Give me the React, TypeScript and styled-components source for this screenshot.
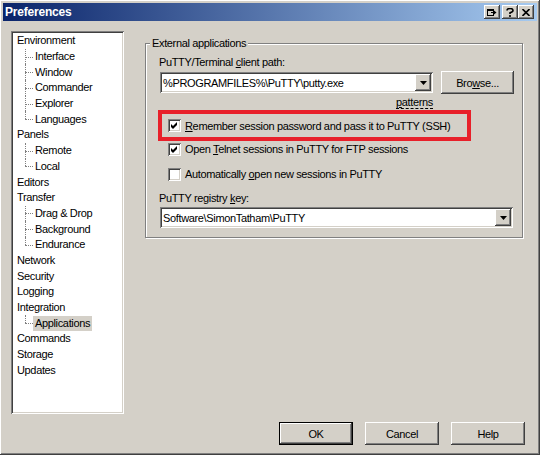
import React from "react";
import styled, { createGlobalStyle } from "styled-components";

const GlobalStyle = createGlobalStyle`
  html, body {
    margin: 0;
    padding: 0;
    background: #d4d0c8;
  }
  body {
    font-family: "Liberation Sans", Arial, sans-serif;
    font-size: 11px;
    letter-spacing: -0.35px;
    color: #000;
  }
`;

const raised = `
  box-shadow: inset -1px -1px 0 #404040, inset 1px 1px 0 #fff,
    inset -2px -2px 0 #808080, inset 2px 2px 0 #d4d0c8;
`;

const sunken = `
  box-shadow: inset 1px 1px 0 #808080, inset -1px -1px 0 #fff,
    inset 2px 2px 0 #404040, inset -2px -2px 0 #d4d0c8;
`;

const Window = styled.div`
  width: 540px;
  height: 455px;
  box-sizing: border-box;
  padding: 3px;
  background: #d4d0c8;
  display: flex;
  flex-direction: column;
  ${raised}
`;

const TitleBar = styled.div`
  height: 18px;
  flex-shrink: 0;
  display: flex;
  align-items: center;
  padding: 0 3px 0 2px;
  background: linear-gradient(to right, #0a246a, #a6caf0);
  color: #fff;
  font-weight: bold;
  font-size: 12px;
  letter-spacing: -0.2px;
`;

const Title = styled.div`
  flex: 1;
`;

const CaptionButtons = styled.div`
  display: flex;
`;

const CaptionButton = styled.div<{ $gap?: number }>`
  width: 16px;
  height: 14px;
  margin-left: ${(p) => p.$gap ?? 0}px;
  background: #d4d0c8;
  display: flex;
  align-items: center;
  justify-content: center;
  ${raised}
`;

const Body = styled.div`
  flex: 1;
  display: flex;
  flex-direction: column;
  padding: 10px 12px 7px 8px;
`;

const MainRow = styled.div`
  display: flex;
  height: 383px;
`;

const Tree = styled.div`
  width: 113px;
  height: 383px;
  box-sizing: border-box;
  padding: 2px 2px 2px 4px;
  background: #fff;
  ${sunken}
`;

const TreeRow = styled.div`
  height: 15.7px;
  display: flex;
  align-items: center;
  white-space: nowrap;
`;

const Connector = styled.div<{ $last?: boolean }>`
  position: relative;
  width: 18px;
  align-self: stretch;

  &::before {
    content: "";
    position: absolute;
    left: 10px;
    top: 0;
    height: ${(p) => (p.$last ? "50%" : "100%")};
    border-left: 1px dotted #808080;
  }

  &::after {
    content: "";
    position: absolute;
    left: 10px;
    top: 50%;
    width: 8px;
    border-top: 1px dotted #808080;
  }
`;

const TreeLabel = styled.span<{ $selected?: boolean }>`
  padding: 0 2px;
  line-height: 15px;
  background: ${(p) => (p.$selected ? "#d4d0c8" : "transparent")};
`;

const Page = styled.div`
  flex: 1;
  padding: 12px 0 0 21px;
`;

const GroupBox = styled.div`
  position: relative;
  width: 378px;
  height: 195px;
  box-sizing: border-box;
  border: 1px solid #808080;
  box-shadow: inset 1px 1px 0 #fff, 1px 1px 0 #fff;
  padding: 11px 0 0 14px;
  display: flex;
  flex-direction: column;
  align-items: flex-start;
`;

const Legend = styled.span`
  position: absolute;
  top: -7px;
  left: 4px;
  padding: 0 2px;
  line-height: 13px;
  background: #d4d0c8;
`;

const FieldLabel = styled.div<{ $top?: number }>`
  line-height: 14px;
  margin-top: ${(p) => p.$top ?? 0}px;
  margin-left: -1px;
`;

const U = styled.span`
  text-decoration: underline;
  text-underline-offset: 1px;
`;

const InputRow = styled.div`
  display: flex;
  align-items: center;
  margin-top: 2px;
  height: 23px;
`;

const Combo = styled.div<{ $width: number; $top?: number }>`
  width: ${(p) => p.$width}px;
  height: 21px;
  margin-top: ${(p) => p.$top ?? 0}px;
  box-sizing: border-box;
  padding: 2px;
  background: #fff;
  display: flex;
  align-items: center;
  ${sunken}
`;

const ComboText = styled.div`
  flex: 1;
  padding-left: 1px;
  white-space: nowrap;
  overflow: hidden;
`;

const DropButton = styled.div`
  width: 16px;
  height: 17px;
  background: #d4d0c8;
  display: flex;
  align-items: center;
  justify-content: center;
  ${raised}
`;

const Button = styled.div<{ $default?: boolean; $width?: number }>`
  width: ${(p) => p.$width ?? 74}px;
  height: 23px;
  box-sizing: border-box;
  background: #d4d0c8;
  display: flex;
  align-items: center;
  justify-content: center;
  ${(p) =>
    p.$default
      ? `box-shadow: inset 0 0 0 1px #000, inset -2px -2px 0 #404040, inset 2px 2px 0 #fff,
          inset -3px -3px 0 #808080, inset 3px 3px 0 #d4d0c8;`
      : raised}
`;

const BrowseButton = styled(Button)`
  margin-left: 8px;
`;

const Patterns = styled.div`
  width: 273px;
  text-align: right;
  margin-top: 3px;
  height: 13px;
  line-height: 11px;
`;

const PatternsText = styled.span`
  border-bottom: 1px dashed #000;
`;

const Highlight = styled.div`
  width: 313px;
  height: 31px;
  box-sizing: border-box;
  margin: 0 0 0 -2px;
  border: 4px solid #e8202a;
  padding-left: 6px;
  display: flex;
  align-items: center;
`;

const CheckRow = styled.div<{ $top?: number; $indent?: number }>`
  display: flex;
  align-items: center;
  gap: 4px;
  height: 16px;
  margin-top: ${(p) => p.$top ?? 0}px;
  margin-left: ${(p) => p.$indent ?? 8}px;
  white-space: nowrap;
`;

const CheckBox = styled.div`
  width: 13px;
  height: 13px;
  box-sizing: border-box;
  padding: 2px;
  background: #fff;
  ${sunken}
`;

const ButtonRow = styled.div`
  display: flex;
  justify-content: flex-end;
  gap: 12px;
  margin-top: 8px;
`;

const CheckMark = () => (
  <svg width="9" height="9" viewBox="0 0 9 9" style={{ display: "block" }}>
    <polygon points="1,3 3,5 7,1 7,4 3,8 1,6" fill="#000" />
  </svg>
);

const Check = ({ checked }: { checked: boolean }) => (
  <CheckBox>{checked ? <CheckMark /> : null}</CheckBox>
);

const Arrow = () => (
  <svg width="7" height="4" viewBox="0 0 7 4" style={{ display: "block" }}>
    <polygon points="0,0 7,0 3.5,4" fill="#000" />
  </svg>
);

const tree: { label: string; child?: boolean; last?: boolean; selected?: boolean }[] = [
  { label: "Environment" },
  { label: "Interface", child: true },
  { label: "Window", child: true },
  { label: "Commander", child: true },
  { label: "Explorer", child: true },
  { label: "Languages", child: true, last: true },
  { label: "Panels" },
  { label: "Remote", child: true },
  { label: "Local", child: true, last: true },
  { label: "Editors" },
  { label: "Transfer" },
  { label: "Drag & Drop", child: true },
  { label: "Background", child: true },
  { label: "Endurance", child: true, last: true },
  { label: "Network" },
  { label: "Security" },
  { label: "Logging" },
  { label: "Integration" },
  { label: "Applications", child: true, last: true, selected: true },
  { label: "Commands" },
  { label: "Storage" },
  { label: "Updates" },
];

const App = () => {
  return (
    <>
      <GlobalStyle />
      <Window>
        <TitleBar>
          <Title>Preferences</Title>
          <CaptionButtons>
            <CaptionButton>
              <svg width="10" height="9" viewBox="0 0 10 9" style={{ display: "block" }}>
                <rect x="0.5" y="1.5" width="6" height="6" fill="none" stroke="#000" />
                <rect x="0" y="1" width="7" height="2" fill="#000" />
                <rect x="4" y="4" width="4" height="1" fill="#000" />
                <polygon points="7,2.5 9.5,4.5 7,6.5" fill="#000" />
              </svg>
            </CaptionButton>
            <CaptionButton $gap={2}>
              <svg width="8" height="9" viewBox="0 0 8 9" style={{ display: "block" }}>
                <path d="M1 2.5 Q1 0.5 4 0.5 Q7 0.5 7 2.5 Q7 4 4 4.8 V6" fill="none" stroke="#000" strokeWidth="1.6" />
                <rect x="3.2" y="7" width="1.6" height="2" fill="#000" />
              </svg>
            </CaptionButton>
            <CaptionButton>
              <svg width="8" height="7" viewBox="0 0 8 7" style={{ display: "block" }}>
                <path d="M0.5 0 L7.5 7 M7.5 0 L0.5 7" stroke="#000" strokeWidth="1.6" />
              </svg>
            </CaptionButton>
          </CaptionButtons>
        </TitleBar>
        <Body>
          <MainRow>
            <Tree>
              {tree.map((item) => (
                <TreeRow key={item.label}>
                  {item.child ? <Connector $last={item.last} /> : null}
                  <TreeLabel $selected={item.selected}>{item.label}</TreeLabel>
                </TreeRow>
              ))}
            </Tree>
            <Page>
              <GroupBox>
                <Legend>External applications</Legend>
                <FieldLabel>
                  PuTTY/Terminal <U>c</U>lient path:
                </FieldLabel>
                <InputRow>
                  <Combo $width={273}>
                    <ComboText>%PROGRAMFILES%\PuTTY\putty.exe</ComboText>
                    <DropButton>
                      <Arrow />
                    </DropButton>
                  </Combo>
                  <BrowseButton $width={73}>
                    Bro<U>w</U>se...
                  </BrowseButton>
                </InputRow>
                <Patterns>
                  <PatternsText>
                    <U>p</U>atterns
                  </PatternsText>
                </Patterns>
                <Highlight>
                  <CheckRow $indent={0}>
                    <Check checked />
                    <span>
                      <U>R</U>emember session password and pass it to PuTTY (SSH)
                    </span>
                  </CheckRow>
                </Highlight>
                <CheckRow>
                  <Check checked />
                  <span>
                    Open <U>T</U>elnet sessions in PuTTY for FTP sessions
                  </span>
                </CheckRow>
                <CheckRow $top={9}>
                  <Check checked={false} />
                  <span>
                    Automatically <U>o</U>pen new sessions in PuTTY
                  </span>
                </CheckRow>
                <FieldLabel $top={9}>
                  PuTTY registry <U>k</U>ey:
                </FieldLabel>
                <Combo $width={353} $top={2}>
                  <ComboText>Software\SimonTatham\PuTTY</ComboText>
                  <DropButton>
                    <Arrow />
                  </DropButton>
                </Combo>
              </GroupBox>
            </Page>
          </MainRow>
          <ButtonRow>
            <Button $default>OK</Button>
            <Button>Cancel</Button>
            <Button>Help</Button>
          </ButtonRow>
        </Body>
      </Window>
    </>
  );
};

export default App;
